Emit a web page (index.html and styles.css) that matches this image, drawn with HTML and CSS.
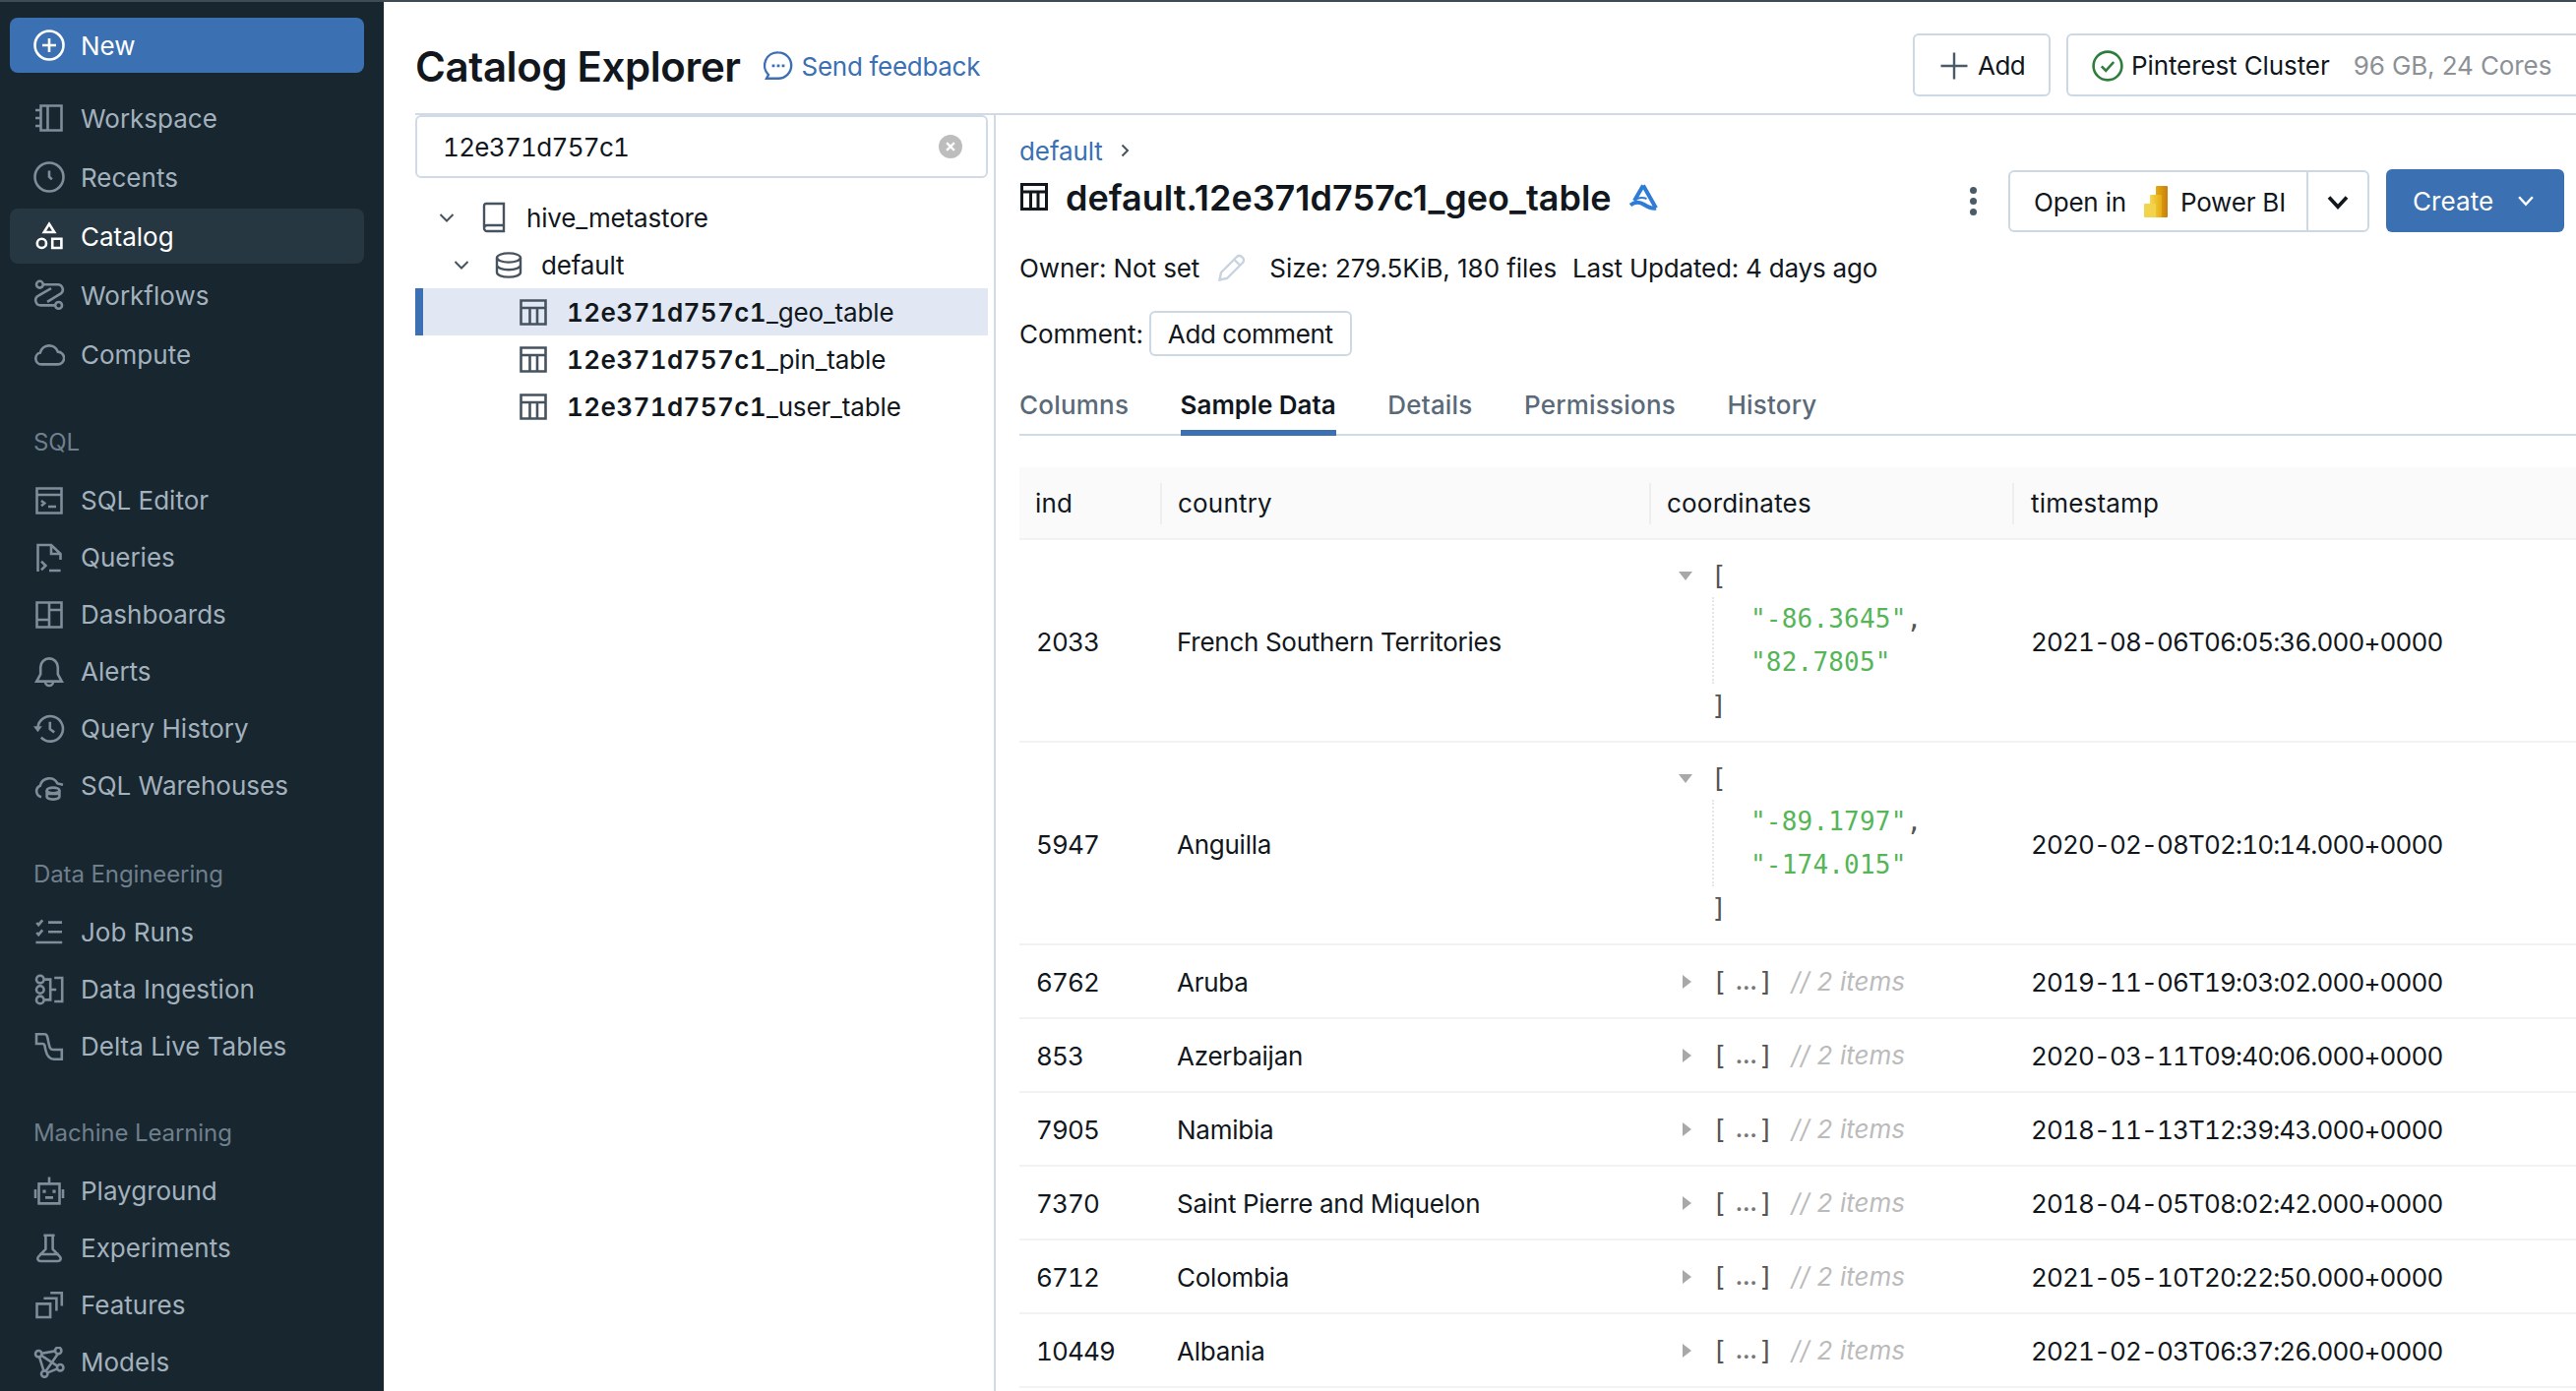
FILE: index.html
```html
<!DOCTYPE html>
<html lang="en">
<head>
  <meta charset="UTF-8" />
  <title>Catalog Explorer</title>
  <link rel="stylesheet" href="styles.css">
</head>
<body>
  <div class="topline"></div>
  <div class="app">

    <aside class="sidebar">
      <a class="new-btn">
        <svg class="nav-icon" viewBox="0 0 16 16"><circle cx="8" cy="8" r="7.25"/><path d="M8 4.500v7M4.500 8h7"/></svg>
        New
      </a>
      <nav class="nav-top">
        <a class="nav-item">
          <svg class="nav-icon" viewBox="0 0 16 16"><path d="M3.750 1.750h10.500v12.500H3.750zM7.250 2v12M1 4h2.750M1 8h2.750M1 12h2.750"/></svg>
          Workspace
        </a>
        <a class="nav-item">
          <svg class="nav-icon" viewBox="0 0 16 16"><circle cx="8" cy="8" r="7.25"/><path d="M8 4.800v3l1.400 1.400"/></svg>
          Recents
        </a>
        <a class="nav-item active">
          <svg class="nav-icon" viewBox="0 0 16 16"><path d="M8 1.800l2.600 4.200H5.400zM9.600 9.400h4.600v4.600H9.600z"/><circle cx="4.200" cy="11.700" r="2.300"/></svg>
          Catalog
        </a>
        <a class="nav-item">
          <svg class="nav-icon" viewBox="0 0 16 16"><circle cx="3.200" cy="2.600" r="1.700"/><circle cx="12.800" cy="13.200" r="1.700"/><path d="M5 2.600h7.200a2.600 2.600 0 0 1 1.300 4.900L7 11.400M11 13.200H3.800a2.600 2.600 0 0 1-1.300-4.900L9 4.600"/></svg>
          Workflows
        </a>
        <a class="nav-item">
          <svg class="nav-icon" viewBox="0 0 16 16"><path d="M4 13.200a3 3 0 0 1-.6-5.900 4.700 4.700 0 0 1 9-.5 3.200 3.200 0 0 1-.1 6.400z"/></svg>
          Compute
        </a>
      </nav>

      <section class="nav-group">
        <h4>SQL</h4>
        <a class="nav-item">
          <svg class="nav-icon" viewBox="0 0 16 16"><path d="M1.750 1.750h12.500v12.500H1.750zM2 5h12M4 8l1.600 1.300L4 10.600M7.500 11h4"/></svg>
          SQL Editor
        </a>
        <a class="nav-item">
          <svg class="nav-icon" viewBox="0 0 16 16"><path d="M2.250 15V1.500h6.800L13.750 6v3M9 1.800V6h4.500M4 9.800l2.200 2.200L4 14.200M8 14.500h5.800"/></svg>
          Queries
        </a>
        <a class="nav-item">
          <svg class="nav-icon" viewBox="0 0 16 16"><path d="M1.750 1.750h12.500v12.500H1.750zM8 2v12M2 10.500h6M8 5.500h6"/></svg>
          Dashboards
        </a>
        <a class="nav-item">
          <svg class="nav-icon" viewBox="0 0 16 16"><path d="M8 1.200a4.400 4.400 0 0 0-4.400 4.400v3.600L1.600 12.800h12.800l-2-3.600V5.600A4.400 4.400 0 0 0 8 1.200zM6 13a2 2 0 0 0 4 0"/></svg>
          Alerts
        </a>
        <a class="nav-item">
          <svg class="nav-icon" viewBox="0 0 16 16"><path d="M2.200 7.400a6.400 6.400 0 1 1 1.700 4.900M8.400 4.400v3.700l2.200 1.600"/><path class="solid" d="M0 6.600h4.400L2.200 9.600z"/></svg>
          Query History
        </a>
        <a class="nav-item">
          <svg class="nav-icon" viewBox="0 0 16 16"><path d="M4 13.600a3 3 0 0 1-.6-5.700 4.700 4.700 0 0 1 8.800-1.200l2.800.7"/><ellipse cx="10" cy="10.200" rx="3.200" ry="1.400"/><path d="M6.800 10.200v3.200c0 .8 1.400 1.400 3.200 1.400s3.200-.6 3.200-1.400v-3.200M6.800 12h6.400"/></svg>
          SQL Warehouses
        </a>
      </section>

      <section class="nav-group">
        <h4>Data Engineering</h4>
        <a class="nav-item">
          <svg class="nav-icon" viewBox="0 0 16 16"><path d="M1.600 3l1 1.100 2-2.400M1.600 8l1 1.100 2-2.400M7.500 2.800h7M7.500 7.600h7M1.200 13h13.400"/></svg>
          Job Runs
        </a>
        <a class="nav-item">
          <svg class="nav-icon" viewBox="0 0 16 16"><circle cx="3.400" cy="2.800" r="1.900"/><circle cx="3.400" cy="8" r="1.900"/><circle cx="3.400" cy="13.200" r="1.900"/><path d="M5.600 2.800h3v10.400h-3M8.600 8h3M10.600 2h4v12h-4"/></svg>
          Data Ingestion
        </a>
        <a class="nav-item">
          <svg class="nav-icon" viewBox="0 0 16 16"><path d="M1.500 1.600h4.200c1.600 0 1.400 2 2 4.400.5 2.200.7 3.500 2.300 3.500h4.400v4.900H10.400c-2.600 0-3.600-1.800-4.200-4.600-.5-2.400-.5-3.300-1.400-3.300H1.500z"/></svg>
          Delta Live Tables
        </a>
      </section>

      <section class="nav-group">
        <h4>Machine Learning</h4>
        <a class="nav-item">
          <svg class="nav-icon" viewBox="0 0 16 16"><path d="M2.750 4.200h10.500v10H2.750zM8 .8v3.400M1 7v4.500M15 7v4.500M6 11.200h4"/><path class="solid" d="M4.700 7.300h1.600v1.600H4.700zM9.700 7.300h1.600v1.600H9.700z"/></svg>
          Playground
        </a>
        <a class="nav-item">
          <svg class="nav-icon" viewBox="0 0 16 16"><path d="M5.200 1.400h5.600M6.200 1.600v6.800l-3.600 3.800c-.9 1-.3 2.300 1 2.300h8.800c1.300 0 1.900-1.300 1-2.300L9.800 8.400V1.600M3 11h10"/></svg>
          Experiments
        </a>
        <a class="nav-item">
          <svg class="nav-icon" viewBox="0 0 16 16"><path d="M1.750 7.200h6.800V14H1.750zM5.200 4.400h6.500v6.400M8.600 1.600h5.800v6.600"/></svg>
          Features
        </a>
        <a class="nav-item">
          <svg class="nav-icon" viewBox="0 0 16 16"><circle cx="2.600" cy="3.600" r="1.600"/><circle cx="12.600" cy="2" r="1.600"/><circle cx="13.600" cy="10.600" r="1.600"/><circle cx="5.600" cy="13.800" r="1.600"/><path d="M4.200 3.400L11 2.200M4 4.400l8.200 5.400M3 5.200l2.200 7M12.400 3.600l-6 8.600M12.200 11.200l-5 2"/></svg>
          Models
        </a>
      </section>
    </aside>

    <main class="main">
      <header class="page-head">
        <h1>Catalog Explorer</h1>
        <a class="feedback">
          <svg class="icon-md" viewBox="0 0 16 16"><path d="M8 1.200a6.600 6.600 0 0 1 0 13.200H2l1-1.900A6.600 6.600 0 0 1 8 1.200z"/><path class="solid" d="M4.800 7.200h1.400v1.400H4.800zM7.300 7.200h1.400v1.400H7.300zM9.800 7.200h1.400v1.400H9.800z"/></svg>
          Send feedback
        </a>
        <div class="head-actions">
          <button class="btn add-btn">
            <svg class="icon-plus" viewBox="0 0 16 16"><path d="M8 .8v14.400M.8 8h14.400"/></svg>
            Add
          </button>
          <button class="btn cluster-btn">
            <svg class="icon-check" viewBox="0 0 16 16"><circle cx="8" cy="8" r="7.200"/><path d="M4.900 8.200l2.200 2.200 4-4.400"/></svg>
            Pinterest Cluster
            <span class="cluster-size">96 GB, 24 Cores</span>
          </button>
        </div>
      </header>

      <div class="explorer">
        <div class="tree-pane">
          <div class="search-box">
            <span class="search-value">12e371d757c1</span>
            <span class="clear-btn">
              <svg viewBox="0 0 16 16"><path d="M5.400 5.400l5.200 5.200M10.600 5.400l-5.200 5.200"/></svg>
            </span>
          </div>
          <ul class="tree">
            <li class="tree-row level-0">
              <svg class="chev" viewBox="0 0 16 16"><path d="M1.500 5l6.500 6.500L14.500 5"/></svg>
              <svg class="book-icon" viewBox="0 0 12 16"><path d="M1 13V2a1 1 0 0 1 1-1h9v14H2.500a1.500 1.500 0 0 1 0-3H11"/></svg>
              hive_metastore
            </li>
            <li class="tree-row level-1">
              <svg class="chev" viewBox="0 0 16 16"><path d="M1.500 5l6.500 6.500L14.500 5"/></svg>
              <svg class="db-icon" viewBox="0 0 14 13.500"><ellipse cx="7" cy="3" rx="6" ry="2.300"/><path d="M1 3v7.500c0 1.300 2.700 2.300 6 2.300s6-1 6-2.300V3M1 6.800c0 1.300 2.700 2.300 6 2.300s6-1 6-2.300"/></svg>
              default
            </li>
            <li class="tree-row level-2 selected">
              <svg class="table-icon" viewBox="0 0 28 27"><path d="M1.500 1.500h25v24h-25zM2 9h24M10.500 9.500V25M18 9.500V25"/></svg>
              <span><strong>12e371d757c1</strong>_geo_table</span>
            </li>
            <li class="tree-row level-2">
              <svg class="table-icon" viewBox="0 0 28 27"><path d="M1.500 1.500h25v24h-25zM2 9h24M10.500 9.500V25M18 9.500V25"/></svg>
              <span><strong>12e371d757c1</strong>_pin_table</span>
            </li>
            <li class="tree-row level-2">
              <svg class="table-icon" viewBox="0 0 28 27"><path d="M1.500 1.500h25v24h-25zM2 9h24M10.500 9.500V25M18 9.500V25"/></svg>
              <span><strong>12e371d757c1</strong>_user_table</span>
            </li>
          </ul>
        </div>

        <div class="detail-pane">
          <div class="crumbs">
            <a>default</a>
            <svg viewBox="0 0 16 16"><path d="M5.500 2.500l5.500 5.500-5.500 5.500"/></svg>
          </div>

          <div class="title-row">
            <svg class="title-icon" viewBox="0 0 28 28"><path d="M1.500 1.500h25v25h-25zM2 9h24M10.500 9.500V26M18 9.500V26"/></svg>
            <h2>default.12e371d757c1_geo_table</h2>
            <svg class="delta-icon" viewBox="0 0 31 30"><path d="M15 3.500L6 19M15 3.500L28 26.500M2 23.500c4.500-3.500 9.500-3.500 14-.5 3.500 2.300 7.500 4.500 12 3.500"/><path class="thin" d="M9 17c3-1.500 6-1.500 9.500 0"/></svg>
            <div class="title-actions">
              <span class="kebab"><i></i><i></i><i></i></span>
              <div class="split-btn">
                <button class="split-main">
                  Open in
                  <svg class="pbi-icon" viewBox="0 0 24 32">
                    <defs>
                      <linearGradient id="pbiDark" x1="0" x2="1" y1="0" y2="0"><stop offset="0" stop-color="#e6ad10"/><stop offset="1" stop-color="#c87e0e"/></linearGradient>
                      <linearGradient id="pbiMid" x1="0" x2="1" y1="0" y2="0"><stop offset="0" stop-color="#f6d751"/><stop offset="1" stop-color="#e6ad10"/></linearGradient>
                    </defs>
                    <rect x="12" y="0" width="12" height="32" rx="1" fill="url(#pbiDark)"/>
                    <rect x="6" y="9" width="12" height="23" rx="1" fill="url(#pbiMid)"/>
                    <rect x="0" y="18" width="12" height="14" rx="1" fill="#f2d44c"/>
                  </svg>
                  Power BI
                </button>
                <button class="split-caret">
                  <svg viewBox="0 0 16 16"><path d="M2 5l6 6.500L14 5"/></svg>
                </button>
              </div>
              <button class="create-btn">
                Create
                <svg viewBox="0 0 16 16"><path d="M2.500 5l5.500 6 5.500-6"/></svg>
              </button>
            </div>
          </div>

          <div class="meta-row">
            <span class="meta-owner">Owner: Not set</span>
            <svg class="pencil" viewBox="0 0 28 28"><path d="M1.500 26.500L3 19 19 3a3.500 3.500 0 0 1 5 0l1 1a3.500 3.500 0 0 1 0 5L9 25zM16.500 6l5.500 5.500"/></svg>
            <span class="meta-size">Size: 279.5KiB, 180 files</span>
            <span class="meta-updated">Last Updated: 4 days ago</span>
          </div>

          <div class="comment-row">
            <span>Comment:</span>
            <button class="comment-btn">Add comment</button>
          </div>

          <div class="tabs">
            <a class="tab">Columns</a>
            <a class="tab active">Sample Data</a>
            <a class="tab">Details</a>
            <a class="tab">Permissions</a>
            <a class="tab">History</a>
          </div>

          <table class="data-table">
            <colgroup>
              <col class="col-ind"><col class="col-country"><col class="col-coords"><col class="col-time">
            </colgroup>
            <thead>
              <tr>
                <th><div>ind</div></th>
                <th><div>country</div></th>
                <th><div>coordinates</div></th>
                <th><div>timestamp</div></th>
              </tr>
            </thead>
            <tbody>
              <tr class="tall">
                <td>2033</td>
                <td>French Southern Territories</td>
                <td class="json-cell">
                  <div class="json-line"><i class="caret-down"></i><span class="bracket">[</span></div>
                  <div class="json-items">
                    <div class="json-line"><span class="str">"-86.3645"</span><span class="bracket">,</span></div>
                    <div class="json-line"><span class="str">"82.7805"</span></div>
                  </div>
                  <div class="json-line json-end"><span class="bracket">]</span></div>
                </td>
                <td>2021-08-06T06:05:36.000+0000</td>
              </tr>
              <tr class="tall">
                <td>5947</td>
                <td>Anguilla</td>
                <td class="json-cell">
                  <div class="json-line"><i class="caret-down"></i><span class="bracket">[</span></div>
                  <div class="json-items">
                    <div class="json-line"><span class="str">"-89.1797"</span><span class="bracket">,</span></div>
                    <div class="json-line"><span class="str">"-174.015"</span></div>
                  </div>
                  <div class="json-line json-end"><span class="bracket">]</span></div>
                </td>
                <td>2020-02-08T02:10:14.000+0000</td>
              </tr>
              <tr>
                <td>6762</td>
                <td>Aruba</td>
                <td class="json-cell"><div class="json-line"><i class="caret-right"></i><span class="bracket">[</span><span class="dots">…</span><span class="bracket">]</span><em>// 2 items</em></div></td>
                <td>2019-11-06T19:03:02.000+0000</td>
              </tr>
              <tr>
                <td>853</td>
                <td>Azerbaijan</td>
                <td class="json-cell"><div class="json-line"><i class="caret-right"></i><span class="bracket">[</span><span class="dots">…</span><span class="bracket">]</span><em>// 2 items</em></div></td>
                <td>2020-03-11T09:40:06.000+0000</td>
              </tr>
              <tr>
                <td>7905</td>
                <td>Namibia</td>
                <td class="json-cell"><div class="json-line"><i class="caret-right"></i><span class="bracket">[</span><span class="dots">…</span><span class="bracket">]</span><em>// 2 items</em></div></td>
                <td>2018-11-13T12:39:43.000+0000</td>
              </tr>
              <tr>
                <td>7370</td>
                <td>Saint Pierre and Miquelon</td>
                <td class="json-cell"><div class="json-line"><i class="caret-right"></i><span class="bracket">[</span><span class="dots">…</span><span class="bracket">]</span><em>// 2 items</em></div></td>
                <td>2018-04-05T08:02:42.000+0000</td>
              </tr>
              <tr>
                <td>6712</td>
                <td>Colombia</td>
                <td class="json-cell"><div class="json-line"><i class="caret-right"></i><span class="bracket">[</span><span class="dots">…</span><span class="bracket">]</span><em>// 2 items</em></div></td>
                <td>2021-05-10T20:22:50.000+0000</td>
              </tr>
              <tr>
                <td>10449</td>
                <td>Albania</td>
                <td class="json-cell"><div class="json-line"><i class="caret-right"></i><span class="bracket">[</span><span class="dots">…</span><span class="bracket">]</span><em>// 2 items</em></div></td>
                <td>2021-02-03T06:37:26.000+0000</td>
              </tr>
            </tbody>
          </table>
        </div>
      </div>
    </main>
  </div>
</body>
</html>
```

FILE: styles.css
```css
* { margin: 0; padding: 0; box-sizing: border-box; }
html, body { height: 100%; overflow: hidden; }
body {
  font-family: Inter, 'Noto Sans', sans-serif;
  font-size: 26px;
  color: #11171c;
  background: #fff;
}
svg { fill: none; stroke: currentColor; flex-shrink: 0; display: block; }
svg .solid { fill: currentColor; stroke: none; }
button { font: inherit; color: inherit; background: #fff; }

.topline { height: 2px; background: #3f4c55; }
.app { display: flex; height: 1412px; }

/* sidebar */
.sidebar {
  width: 390px;
  flex-shrink: 0;
  background: #17262f;
  padding: 16px 20px 0 10px;
  overflow: hidden;
}
.new-btn, .nav-item {
  display: flex;
  align-items: center;
  gap: 16px;
  height: 56px;
  padding-left: 24px;
  border-radius: 8px;
}
.new-btn { background: #3b70b2; color: #fff; }
.nav-icon { width: 32px; height: 32px; stroke-width: 1.3; color: #7e8d9a; }
.new-btn .nav-icon, .nav-item.active .nav-icon { color: #fff; }
.nav-top { margin-top: 18px; display: flex; flex-direction: column; gap: 4px; }
.nav-item { color: #a3b1bd; }
.nav-item.active { background: #263742; color: #fff; }
.nav-group { margin-top: 41px; }
.nav-top + .nav-group { margin-top: 41.5px; }
.nav-group:last-child { margin-top: 39px; }
.nav-group .nav-item { height: 58px; }
.nav-group h4 {
  height: 40px;
  line-height: 40px;
  margin-bottom: 10px;
  padding-left: 24px;
  font-size: 24px;
  font-weight: 400;
  letter-spacing: -.1px;
  color: #6f7f8c;
}

/* page header */
.main { flex: 1; min-width: 0; padding-left: 32px; overflow: hidden; }
.page-head {
  display: flex;
  align-items: center;
  height: 115px;
  padding-top: 14px;
  border-bottom: 2px solid #d1dbe5;
}
.page-head h1 { font-size: 42px; font-weight: 600; letter-spacing: -.4px; margin-top: 3px; }
.feedback {
  display: flex;
  align-items: center;
  gap: 8px;
  margin: 3px 0 0 22px;
  color: #3b70b2;
  letter-spacing: -.3px;
}
.icon-md { width: 32px; height: 32px; stroke-width: 1.2; }
.head-actions { display: flex; gap: 16px; margin-left: auto; margin-right: -30px; }
.btn {
  display: flex;
  align-items: center;
  height: 64px;
  padding-top: 2px;
  border: 2px solid #ccd8e3;
  border-radius: 6px;
}
.add-btn { width: 140px; padding-left: 25px; gap: 9px; letter-spacing: -.5px; }
.icon-plus { width: 30px; height: 30px; stroke-width: 1.3; color: #4a5a68; }
.cluster-btn { width: 548px; padding-left: 24px; gap: 8px; border-right: 0; letter-spacing: -.1px; }
.icon-check { width: 32px; height: 32px; stroke-width: 1.3; color: #2e7d3c; }
.cluster-size { margin-left: 16px; color: #8c9196; }

/* left tree */
.explorer { display: flex; height: 1297px; }
.tree-pane { width: 590px; flex-shrink: 0; border-right: 2px solid #d1dbe5; padding-right: 6px; }
.search-box {
  display: flex;
  align-items: center;
  justify-content: space-between;
  height: 64px;
  padding: 0 24px 0 26px;
  border: 2px solid #d1dbe5;
  border-radius: 6px;
}
.search-value { font-variant-numeric: tabular-nums; letter-spacing: -.7px; }
.clear-btn {
  width: 24px;
  height: 24px;
  border-radius: 50%;
  background: #bdbdbd;
  color: #fff;
}
.clear-btn svg { width: 24px; height: 24px; stroke-width: 1.5; }
.tree { list-style: none; margin-top: 16px; }
.tree-row { display: flex; align-items: center; height: 48px; letter-spacing: -.15px; }
.level-0 { padding-left: 24px; }
.level-1 { padding-left: 39px; }
.level-2 { padding-left: 106px; }
.selected { background: #e1e8f3; border-left: 8px solid #3b70b2; padding-left: 98px; }
.tree-row strong { font-weight: 600; font-variant-numeric: tabular-nums; letter-spacing: .4px; }
.chev { width: 16px; height: 16px; stroke-width: 2; color: #46535f; }
.book-icon { width: 24px; height: 32px; stroke-width: 1.2; color: #46535f; margin: 0 21px 0 28px; }
.db-icon { width: 28px; height: 27px; stroke-width: 1.2; color: #46535f; margin: 0 19px 0 26px; }
.table-icon { width: 28px; height: 27px; stroke-width: 2.6; color: #46535f; margin-right: 20px; }

/* detail */
.detail-pane { flex: 1; min-width: 0; padding-left: 24px; padding-top: 20px; }
.crumbs { display: flex; align-items: center; height: 32px; gap: 14px; color: #3b70b2; letter-spacing: -.1px; }
.crumbs svg { width: 16px; height: 16px; stroke-width: 2; color: #46535f; }
.title-row { display: flex; align-items: center; height: 64px; margin-top: 3px; padding-right: 12px; }
.title-icon { width: 28px; height: 28px; stroke-width: 3; margin: -8px 18px 0 1px; }
.title-row h2 { font-size: 36px; font-weight: 600; margin-top: -6px; }
.delta-icon { width: 31px; height: 30px; margin: -8px 0 0 17px; color: #2f7cd7; stroke-width: 4; }
.delta-icon .thin { stroke-width: 2; }
.title-actions { display: flex; align-items: center; margin-left: auto; }
.kebab { display: flex; flex-direction: column; gap: 4px; margin-right: 32px; }
.kebab i { display: block; width: 7px; height: 7px; border-radius: 50%; background: #4a5a68; }
.split-btn { display: flex; width: 367px; height: 63px; margin: 1px 17px 0 0; border: 2px solid #ccd8e3; border-radius: 6px; }
.split-main {
  display: flex;
  align-items: center;
  gap: 18px;
  width: 303px;
  padding: 2px 0 0 24px;
  border: 0;
  border-right: 2px solid #ccd8e3;
  border-radius: 6px 0 0 6px;
  letter-spacing: -.2px;
}
.pbi-icon { width: 24px; height: 32px; stroke: none; margin: -2px -5px 0 0; }
.split-caret { flex: 1; border: 0; border-radius: 0 6px 6px 0; display: flex; align-items: center; justify-content: center; }
.split-caret svg { width: 24px; height: 24px; stroke-width: 2.4; }
.create-btn {
  display: flex;
  align-items: center;
  gap: 23px;
  width: 181px;
  height: 64px;
  padding-left: 27px;
  border: 0;
  border-radius: 6px;
  background: #3b70b2;
  color: #fff;
  letter-spacing: .1px;
}
.create-btn svg { width: 20px; height: 20px; stroke-width: 2; }

.meta-row { display: flex; align-items: center; height: 40px; margin-top: 16px; }
.meta-owner { letter-spacing: -.1px; }
.pencil { width: 28px; height: 28px; stroke-width: 2.4; color: #c6d3e0; margin: 0 24px 0 19px; }
.meta-size { letter-spacing: -.05px; }
.meta-updated { margin-left: 16px; letter-spacing: -.2px; }
.comment-row { display: flex; align-items: center; gap: 6px; margin-top: 24px; letter-spacing: -.1px; }
.comment-btn {
  height: 46px;
  padding: 0 17px;
  border: 2px solid #ccd8e3;
  border-radius: 6px;
  letter-spacing: -.4px;
}

.tabs { display: flex; gap: 52.5px; height: 62px; margin-top: 19px; border-bottom: 2px solid #d1dbe5; }
.tab {
  display: flex;
  align-items: center;
  height: 62px;
  padding-bottom: 2px;
  font-weight: 500;
  color: #5a6a78;
  letter-spacing: .2px;
}
.tab.active { color: #11171c; font-weight: 600; letter-spacing: 0; border-bottom: 6px solid #3b70b2; padding: 4px 0 0; }

/* sample data table */
.data-table { width: 1600px; margin-top: 32px; border-collapse: collapse; table-layout: fixed; }
.col-ind { width: 143px; }
.col-country { width: 497px; }
.col-coords { width: 369px; }
.data-table th {
  height: 73px;
  padding-top: 2px;
  background: #fafafa;
  border-bottom: 2px solid #f2f2f2;
  font-weight: 400;
  text-align: left;
  letter-spacing: .2px;
}
.data-table th div { height: 42px; line-height: 42px; padding-left: 16px; border-left: 2px solid #eee; }
.data-table th:first-child div { border-left: 0; }
.data-table th:last-child div { padding-left: 17px; }
.data-table td {
  height: 75px;
  padding: 2px 0 0 19px;
  border-bottom: 2px solid #f2f2f2;
  font-variant-numeric: tabular-nums;
  letter-spacing: -.85px;
}
.data-table td:first-child { padding-left: 17px; }
.data-table td:nth-child(2) { padding-left: 17px; letter-spacing: -.25px; }
.data-table tr.tall td { height: 206px; }

.data-table td.json-cell { padding: 0 0 0 30px; font-family: 'DejaVu Sans Mono', monospace; letter-spacing: 0; }
.json-line { display: flex; align-items: center; height: 44px; }
.json-end { padding-left: 33px; }
.json-items { margin-left: 34px; padding-left: 37px; border-left: 2px dotted #e6e6e6; }
.bracket { color: #555; }
.str { color: #55b558; letter-spacing: .2px; }
.caret-down, .caret-right { display: block; flex-shrink: 0; width: 0; height: 0; }
.caret-down { margin-right: 19px; border-top: 9px solid #a8a8a8; border-left: 7.5px solid transparent; border-right: 7.5px solid transparent; }
.caret-right { margin: 0 21.5px 0 3.5px; border-left: 9px solid #a8a8a8; border-top: 7.5px solid transparent; border-bottom: 7.5px solid transparent; }
.dots { margin: 0 1px 0 8px; font-family: Inter, sans-serif; font-size: 22px; font-weight: 700; color: #777; }
.json-line em { margin-left: 18px; font-family: Inter, sans-serif; color: #bbb; }
```
